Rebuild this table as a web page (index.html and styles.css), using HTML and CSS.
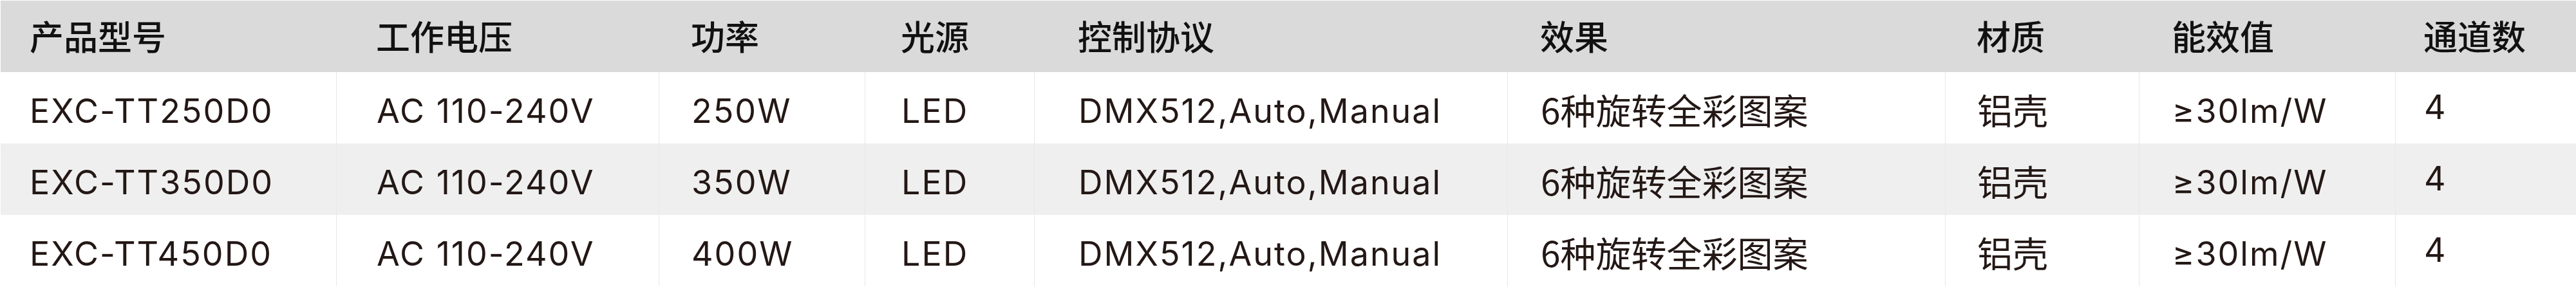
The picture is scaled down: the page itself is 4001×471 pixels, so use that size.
FILE: index.html
```html
<!DOCTYPE html>
<html lang="zh-CN">
<head>
<meta charset="utf-8">
<title>产品参数</title>
<link rel="stylesheet" href="styles.css">
</head>
<body>
<div class="spec" role="table">
  <div class="row head" role="row">
    <div class="cell" role="columnheader">产品型号</div>
    <div class="cell" role="columnheader">工作电压</div>
    <div class="cell" role="columnheader">功率</div>
    <div class="cell" role="columnheader">光源</div>
    <div class="cell" role="columnheader">控制协议</div>
    <div class="cell" role="columnheader">效果</div>
    <div class="cell" role="columnheader">材质</div>
    <div class="cell" role="columnheader">能效值</div>
    <div class="cell" role="columnheader">通道数</div>
  </div>
  <div class="row data" role="row">
    <div class="cell">EXC-TT250D0</div>
    <div class="cell">AC 110-240V</div>
    <div class="cell">250W</div>
    <div class="cell">LED</div>
    <div class="cell">DMX512,Auto,Manual</div>
    <div class="cell cjk">6种旋转全彩图案</div>
    <div class="cell cjk">铝壳</div>
    <div class="cell">≥30lm/W</div>
    <div class="cell raised">4</div>
  </div>
  <div class="row data alt" role="row">
    <div class="cell">EXC-TT350D0</div>
    <div class="cell">AC 110-240V</div>
    <div class="cell">350W</div>
    <div class="cell">LED</div>
    <div class="cell">DMX512,Auto,Manual</div>
    <div class="cell cjk">6种旋转全彩图案</div>
    <div class="cell cjk">铝壳</div>
    <div class="cell">≥30lm/W</div>
    <div class="cell raised">4</div>
  </div>
  <div class="row data" role="row">
    <div class="cell">EXC-TT450D0</div>
    <div class="cell">AC 110-240V</div>
    <div class="cell">400W</div>
    <div class="cell">LED</div>
    <div class="cell">DMX512,Auto,Manual</div>
    <div class="cell cjk">6种旋转全彩图案</div>
    <div class="cell cjk">铝壳</div>
    <div class="cell">≥30lm/W</div>
    <div class="cell raised">4</div>
  </div>
</div>
</body>
</html>
```

FILE: styles.css
```css
html, body {
  margin: 0;
  padding: 0;
  background: #ffffff;
}

.spec {
  margin: 1px 0 0 1px;
  width: 4000px;
}

.row {
  display: grid;
  grid-template-columns: 521px 501px 320px 263px 735px 680px 301px 398px 281px;
  height: 111px;
}

.cell {
  box-sizing: border-box;
  white-space: nowrap;
  overflow: hidden;
}

.row > .cell:nth-child(1) { padding-left: 45px; }
.row > .cell:nth-child(2) { padding-left: 62px; }
.row > .cell:nth-child(3) { padding-left: 50px; }
.row > .cell:nth-child(4) { padding-left: 56px; }
.row > .cell:nth-child(5) { padding-left: 68px; }
.row > .cell:nth-child(6) { padding-left: 51px; }
.row > .cell:nth-child(7) { padding-left: 49px; }
.row > .cell:nth-child(8) { padding-left: 51px; }
.row > .cell:nth-child(9) { padding-left: 44px; }

.head {
  background: #dadada;
}

.head .cell {
  font-family: "Noto Sans CJK SC", sans-serif;
  font-size: 53px;
  font-weight: 500;
  line-height: 53px;
  color: #111111;
  padding-top: 28px;
}

.data {
  background: #ffffff;
}

.data.alt {
  background: #efefef;
}

.data .cell {
  font-family: Inter, "Noto Sans CJK SC", sans-serif;
  font-size: 52px;
  line-height: 52px;
  letter-spacing: 2px;
  color: #231815;
  padding-top: 35px;
}

.data .cell:nth-child(n+2) {
  border-left: 1px solid #e8e8e8;
}

.data .cell.cjk {
  font-family: "Noto Sans CJK SC", sans-serif;
  font-size: 55px;
  line-height: 55px;
  letter-spacing: 0;
  padding-top: 30px;
}

.data .cell.raised {
  padding-top: 29px;
}
```
